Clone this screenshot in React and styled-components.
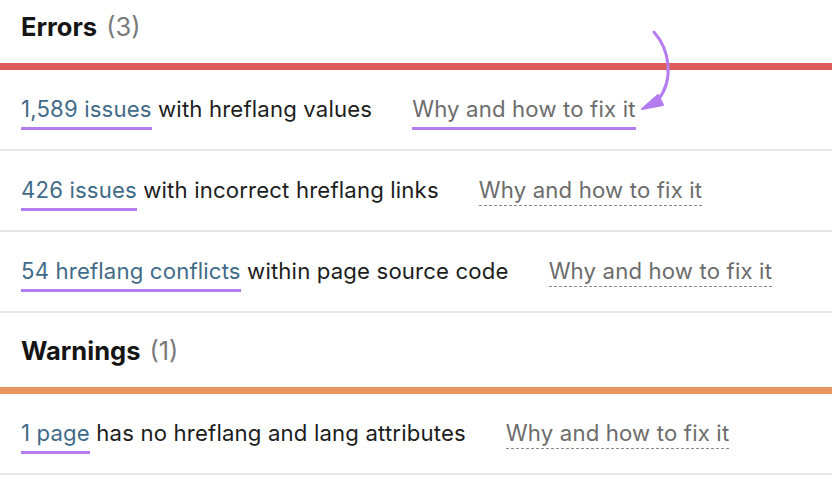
import React from 'react';
import styled, { createGlobalStyle } from 'styled-components';

const GlobalStyle = createGlobalStyle`
  html, body {
    margin: 0;
    padding: 0;
    background: #ffffff;
  }
  body {
    font-family: 'Inter', 'Noto Sans', sans-serif;
    -webkit-font-smoothing: antialiased;
  }
`;

const Page = styled.div`
  position: relative;
  width: 832px;
  height: 489px;
  overflow: hidden;
  background: #ffffff;
`;

const SectionHeader = styled.div`
  display: flex;
  align-items: center;
  height: ${(p) => p.height + 7}px;
  padding: 0 0 ${(p) => p.lift}px 21px;
  border-bottom: 7px solid ${(p) => p.barColor};
  box-sizing: border-box;
`;

const Title = styled.h2`
  margin: 0;
  font-size: 25.5px;
  font-weight: 700;
  color: #151515;
  letter-spacing: 0px;
`;

const Count = styled.span`
  margin-left: 9px;
  font-weight: 400;
  color: #7a7a7a;
`;

const Row = styled.div`
  display: flex;
  align-items: center;
  gap: 40px;
  height: 81px;
  padding: 0 21px 2px;
  box-sizing: border-box;
  border-bottom: 2px solid #e6e6e6;
  font-size: 22.15px;
  letter-spacing: 0.17px;
  color: #1c1c1c;
`;

const Description = styled.span`
  white-space: nowrap;
`;

const Amount = styled.span`
  color: #3f6b88;
  display: inline-block;
  padding-bottom: 5px;
  border-bottom: 3px solid #b57cef;
  margin-bottom: -8px;
`;

const FixLink = styled.span`
  color: #6c6c6c;
  white-space: nowrap;
  display: inline-block;
  padding-bottom: ${(p) => (p.marked ? 5 : 2)}px;
  border-bottom: ${(p) => (p.marked ? '3px solid #b57cef' : '1px dashed #8a8a8a')};
  margin-bottom: ${(p) => (p.marked ? -8 : -3)}px;
`;

const Arrow = styled.svg`
  position: absolute;
  left: 600px;
  top: 20px;
  overflow: visible;
`;

const issues = [
  { count: '1,589 issues', text: 'with hreflang values', marked: true },
  { count: '426 issues', text: 'with incorrect hreflang links' },
  { count: '54 hreflang conflicts', text: 'within page source code' },
];

const IssueRow = ({ count, text, marked }) => (
  <Row>
    <Description>
      <Amount>{count}</Amount> {text}
    </Description>
    <FixLink marked={marked}>Why and how to fix it</FixLink>
  </Row>
);

const App = () => {
  return (
    <Page>
      <GlobalStyle />
      <SectionHeader height={63} lift={10} barColor="#e05c5c">
        <Title>
          Errors<Count>(3)</Count>
        </Title>
      </SectionHeader>
      {issues.map((item) => (
        <IssueRow key={item.count} {...item} />
      ))}
      <SectionHeader height={74} lift={0} barColor="#e8955d">
        <Title>
          Warnings<Count>(1)</Count>
        </Title>
      </SectionHeader>
      <IssueRow count="1 page" text="has no hreflang and lang attributes" />
      <Arrow width="90" height="100" viewBox="0 0 90 100">
        <path
          d="M54 12 C 70 30, 74 60, 58 80"
          fill="none"
          stroke="#b57cef"
          strokeWidth="3"
          strokeLinecap="round"
        />
        <path
          d="M42 89 L 63 85 L 58 75 Z"
          fill="#b57cef"
          stroke="#b57cef"
          strokeWidth="2"
          strokeLinejoin="round"
        />
      </Arrow>
    </Page>
  );
};

export default App;
